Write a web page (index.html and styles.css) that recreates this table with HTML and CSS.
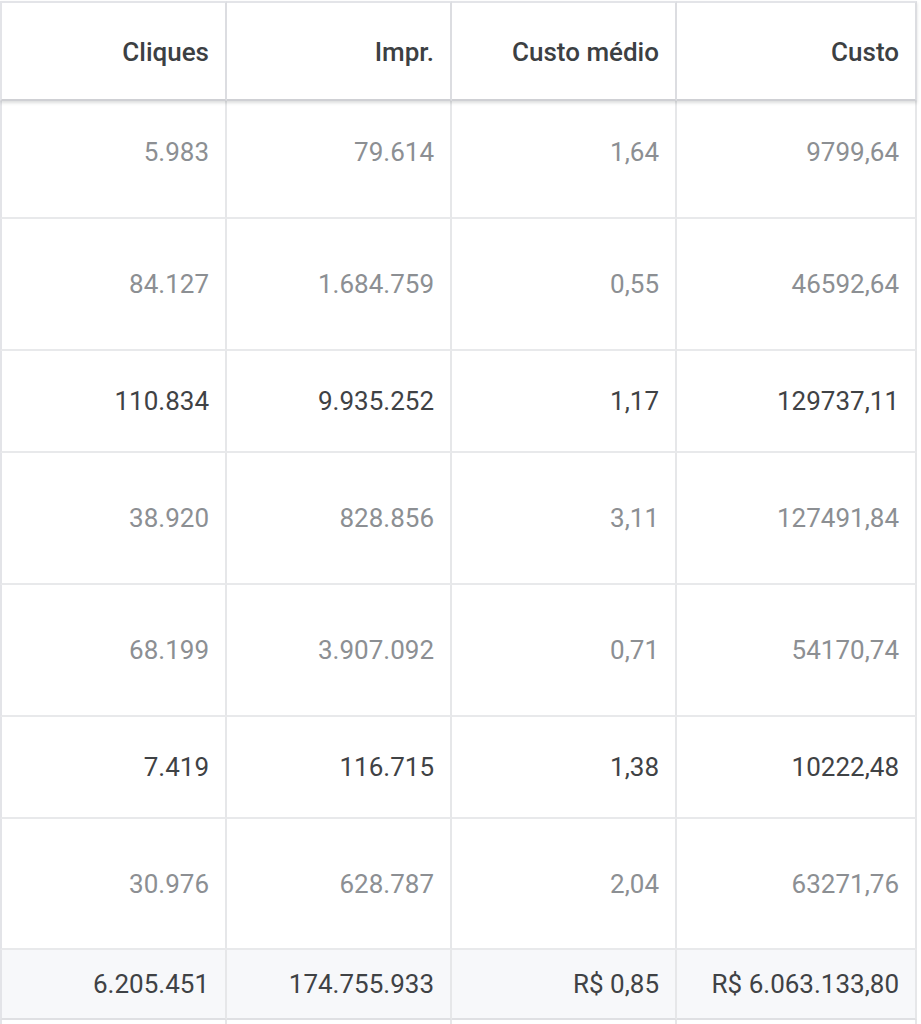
FILE: index.html
```html
<!DOCTYPE html>
<html lang="pt-BR">
<head>
<meta charset="utf-8">
<title>Tabela</title>
<link rel="stylesheet" href="styles.css">
</head>
<body>
<div class="table">
  <div class="row head">
    <div class="cell">Cliques</div>
    <div class="cell">Impr.</div>
    <div class="cell">Custo médio</div>
    <div class="cell">Custo</div>
  </div>
  <div class="row first muted">
    <div class="cell">5.983</div>
    <div class="cell">79.614</div>
    <div class="cell">1,64</div>
    <div class="cell">9799,64</div>
  </div>
  <div class="row tall muted">
    <div class="cell">84.127</div>
    <div class="cell">1.684.759</div>
    <div class="cell">0,55</div>
    <div class="cell">46592,64</div>
  </div>
  <div class="row short">
    <div class="cell">110.834</div>
    <div class="cell">9.935.252</div>
    <div class="cell">1,17</div>
    <div class="cell">129737,11</div>
  </div>
  <div class="row tall muted">
    <div class="cell">38.920</div>
    <div class="cell">828.856</div>
    <div class="cell">3,11</div>
    <div class="cell">127491,84</div>
  </div>
  <div class="row tall muted">
    <div class="cell">68.199</div>
    <div class="cell">3.907.092</div>
    <div class="cell">0,71</div>
    <div class="cell">54170,74</div>
  </div>
  <div class="row short">
    <div class="cell">7.419</div>
    <div class="cell">116.715</div>
    <div class="cell">1,38</div>
    <div class="cell">10222,48</div>
  </div>
  <div class="row tall7 muted">
    <div class="cell">30.976</div>
    <div class="cell">628.787</div>
    <div class="cell">2,04</div>
    <div class="cell">63271,76</div>
  </div>
  <div class="row total">
    <div class="cell">6.205.451</div>
    <div class="cell">174.755.933</div>
    <div class="cell">R$ 0,85</div>
    <div class="cell">R$ 6.063.133,80</div>
  </div>
  <div class="row stub">
    <div class="cell"></div>
    <div class="cell"></div>
    <div class="cell"></div>
    <div class="cell"></div>
  </div>
</div>
</body>
</html>
```

FILE: styles.css
```css
html, body {
  margin: 0;
  padding: 0;
  background: #ffffff;
  overflow: hidden;
}

body {
  font-family: Roboto, "Liberation Sans", Arial, sans-serif;
  font-size: 26px;
  color: #3c4043;
}

.table {
  margin-top: 1px;
  width: 917px;
}

.row {
  display: grid;
  grid-template-columns: 227px 225px 225px 240px;
}

.cell {
  box-sizing: border-box;
  display: flex;
  align-items: center;
  justify-content: flex-end;
  padding-right: 16px;
  border-right: 2px solid #e6e7e9;
  border-bottom: 2px solid #e8e9eb;
  white-space: nowrap;
}

.cell:first-child {
  border-left: 2px solid #e3e4e8;
}

.head {
  position: relative;
  z-index: 1;
  height: 100px;
  box-shadow: 0 2px 3px rgba(60, 64, 67, 0.18);
}

.head .cell {
  height: 100px;
  border-top: 2px solid #e3e4e8;
  border-right-color: #dcdde1;
  border-bottom: 2px solid #cfd0d4;
  font-weight: 500;
  color: #3c4043;
  padding-top: 2px;
}

.first .cell {
  height: 118px;
  padding-bottom: 14px;
}

.tall .cell {
  height: 132px;
}

.short .cell {
  height: 102px;
}

.tall7 .cell {
  height: 131px;
}

.muted .cell {
  color: #8c8f93;
}

.short .cell,
.total .cell {
  color: #3f4245;
}

.total .cell {
  height: 70px;
  background: #f7f8fa;
  border-bottom-color: #dfe0e3;
}

.stub .cell {
  height: 4px;
  border-bottom: 0;
}
```
